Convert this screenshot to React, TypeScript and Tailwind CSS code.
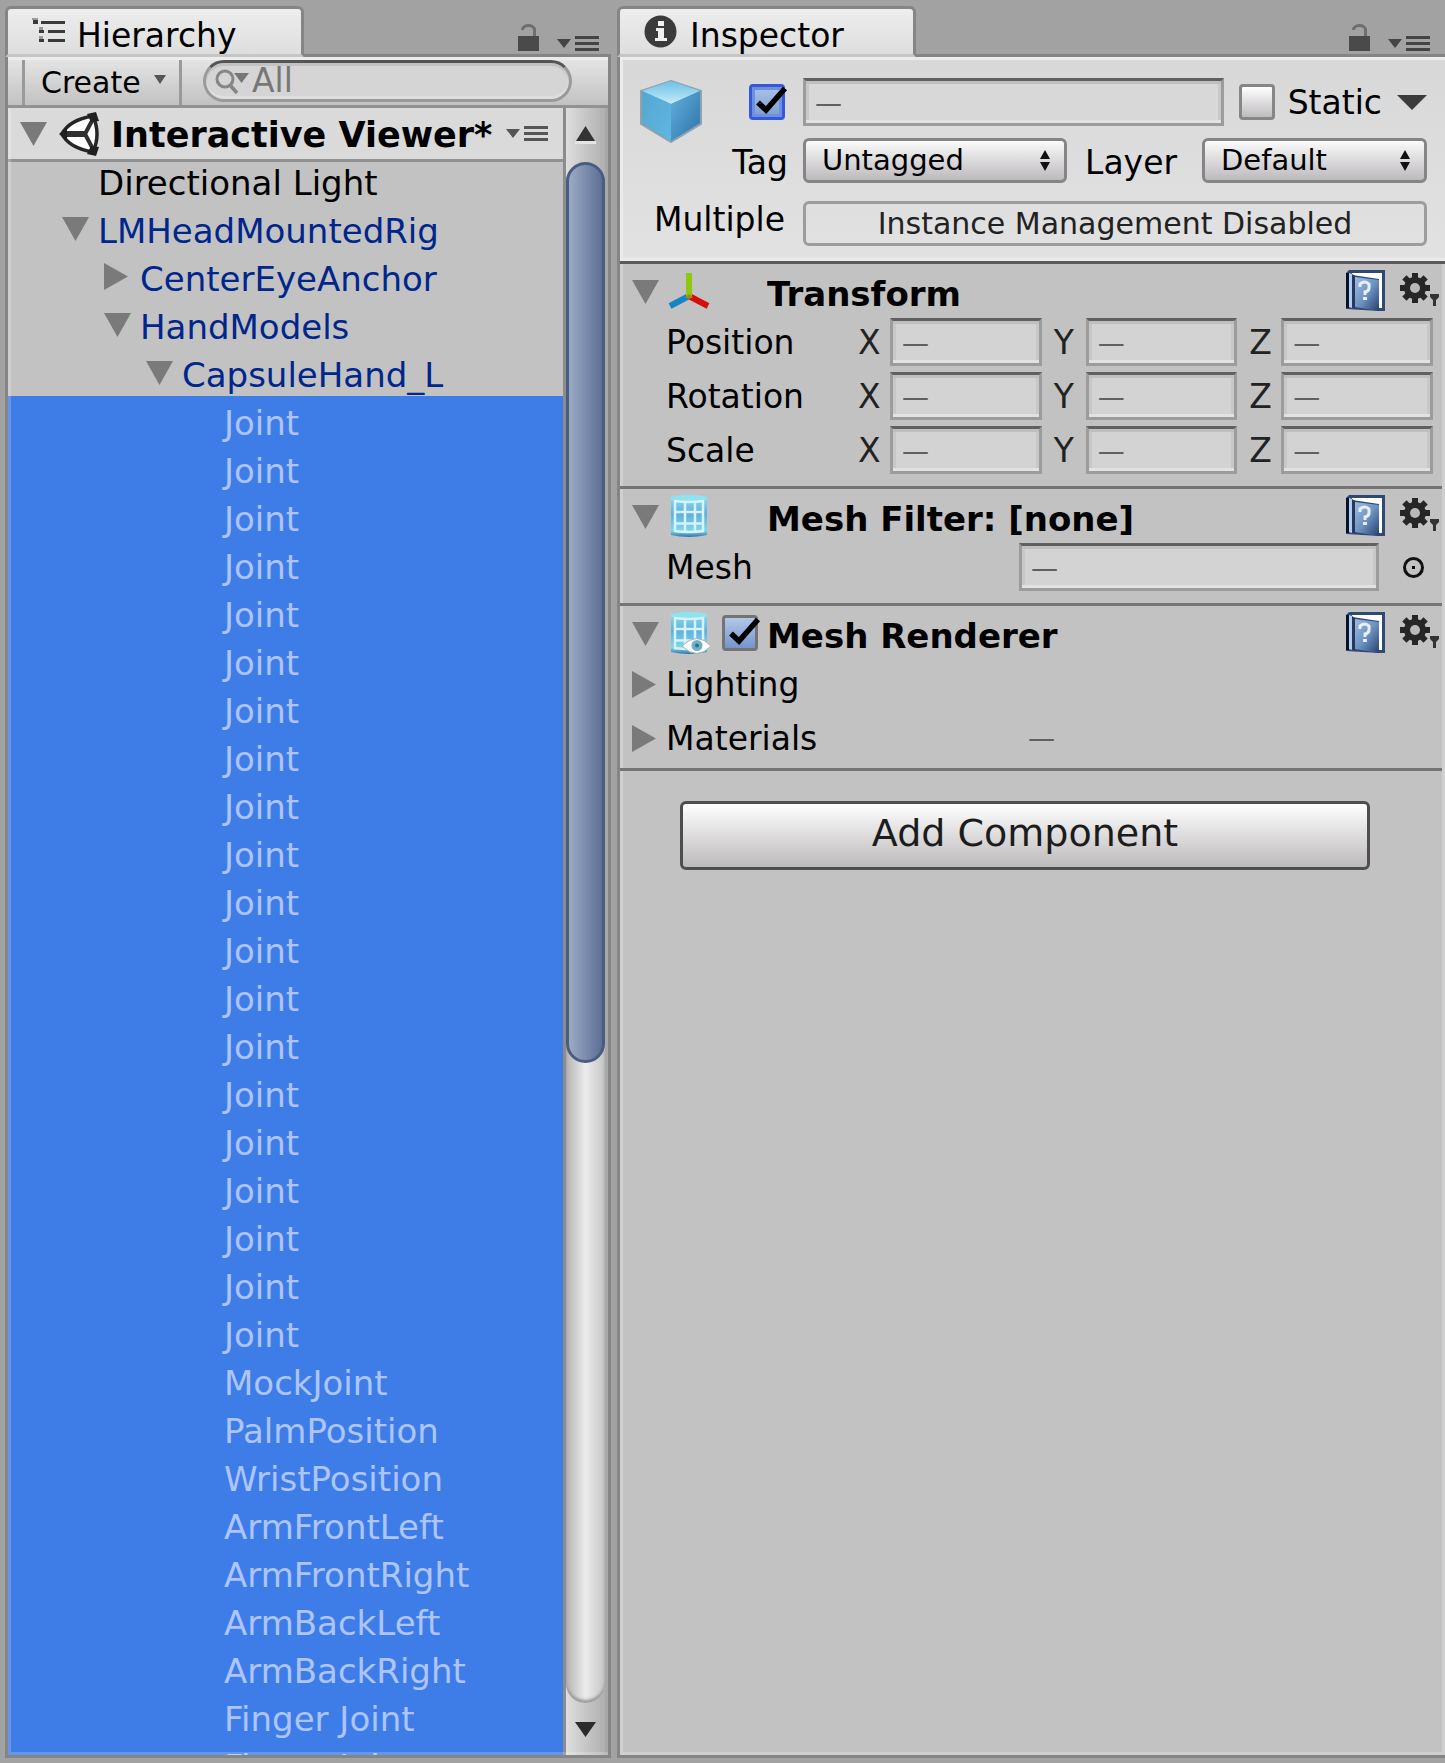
import React, { useState } from "react";

type RowData = { name: string; depth: 0 | 1 | 2 | 3; fold?: "open" | "closed"; kind: "plain" | "prefab" | "selected" };

const joints: RowData[] = Array.from({ length: 20 }, () => ({ name: "Joint", depth: 3, kind: "selected" }));
const others: RowData[] = [
  "MockJoint",
  "PalmPosition",
  "WristPosition",
  "ArmFrontLeft",
  "ArmFrontRight",
  "ArmBackLeft",
  "ArmBackRight",
  "Finger Joint",
  "Finger Joint",
].map((name) => ({ name, depth: 3, kind: "selected" }));

const rows: RowData[] = [
  { name: "Directional Light", depth: 0, kind: "plain" },
  { name: "LMHeadMountedRig", depth: 0, fold: "open", kind: "prefab" },
  { name: "CenterEyeAnchor", depth: 1, fold: "closed", kind: "prefab" },
  { name: "HandModels", depth: 1, fold: "open", kind: "prefab" },
  { name: "CapsuleHand_L", depth: 2, fold: "open", kind: "prefab" },
  ...joints,
  ...others,
];

const indent = ["pl-[54px]", "pl-[96px]", "pl-[138px]", "pl-[180px]"];
const rowColour = {
  plain: "text-black",
  prefab: "text-[#00268c]",
  selected: "bg-[#3e7de7] text-[#adc5fc]",
};

function Fold({ open }: { open: boolean }) {
  return (
    <svg viewBox="0 0 27 27" className="h-[27px] w-[27px] shrink-0" fill="#7a7a7a" aria-hidden="true">
      {open ? <path d="M0 2h27L13.500 26z" /> : <path d="M0 0v27l24-13.500z" />}
    </svg>
  );
}

function LockIcon() {
  return (
    <svg viewBox="0 0 21 27" className="h-[27px] w-[21px]" aria-hidden="true">
      <path d="M0 12h21v15H0z" fill="#4a4a4a" />
      <path d="M4.500 6c0-6 12-6 12 0v6" fill="none" stroke="#6e6e6e" strokeWidth="3" />
    </svg>
  );
}

function MenuIcon({ colour }: { colour: string }) {
  return (
    <svg viewBox="0 0 42 15" className="h-[15px] w-[42px]" fill={colour} aria-hidden="true">
      <path d="M0 3h14L7 12zM18 0h24v3H18zM18 6h24v3H18zM18 12h24v3H18z" />
    </svg>
  );
}

function HierarchyIcon() {
  return (
    <svg viewBox="0 0 33 24" className="mb-[3px] h-6 w-[33px]" fill="#3a3a3a" aria-hidden="true">
      <path d="M9 3h24v3H9zM16 12h17v3H16zM16 21h17v3H16z" />
      <path d="M1 2h5v4H1zM7 12h5v3H7zM7 21h5v3H7z" />
      <path d="M0 0h6v2H0zM7 9h4v3H7zM7 18h4v3H7z" fill="#9a9a9a" />
    </svg>
  );
}

function InfoIcon() {
  return (
    <svg viewBox="0 0 33 33" className="h-[33px] w-[33px]" aria-hidden="true">
      <circle cx="16.500" cy="16.500" r="16" fill="#3b3b3b" />
      <path d="M14 6h6v5h-6zM12 13h8v10h3v3H11v-3h3v-7h-2z" fill="#f0f0f0" />
    </svg>
  );
}

function UnityIcon() {
  return (
    <svg viewBox="0 0 42 44" className="h-11 w-[42px] shrink-0" aria-hidden="true">
      <path d="M3 22Q10 8 34 3q4 9 4 19t-4 19Q10 36 3 22z" fill="#fff" />
      <path
        d="M3 22Q10 8 34 4q4 9 4 18t-4 18Q10 36 3 22z"
        fill="none"
        stroke="#262626"
        strokeWidth="3.500"
        strokeLinejoin="round"
      />
      <path d="M26 22 35 5M26 22l9 17" stroke="#303030" strokeWidth="4" />
      <path d="M3 22h23" stroke="#303030" strokeWidth="6" />
      <path d="M0 22l8-7v14zM28 2l9-2 3 9-8 1zM28 42l9 2 3-9-8-1z" fill="#202020" />
    </svg>
  );
}

function CubeIcon() {
  return (
    <svg viewBox="0 0 66 63" className="h-[63px] w-[66px]" aria-hidden="true">
      <defs>
        <linearGradient id="cubeTop" x1="0" y1="0" x2="0" y2="1">
          <stop offset="0" stopColor="#6ec0e6" />
          <stop offset="1" stopColor="#c3ecf9" />
        </linearGradient>
        <linearGradient id="cubeLeft" x1="0" y1="0" x2="1" y2="1">
          <stop offset="0" stopColor="#55a5cf" />
          <stop offset="1" stopColor="#5fb8e2" />
        </linearGradient>
        <linearGradient id="cubeRight" x1="0" y1="0" x2="1" y2="1">
          <stop offset="0" stopColor="#62b0dc" />
          <stop offset="1" stopColor="#2c72ab" />
        </linearGradient>
      </defs>
      <path d="M33 1 63 11v33L33 62 3 44V11z" fill="#8199a5" stroke="#8fa3ad" strokeWidth="2" />
      <path d="M33 1 62 11 33 24 4 11z" fill="url(#cubeTop)" />
      <path d="M4 11 33 24v37L4 43z" fill="url(#cubeLeft)" />
      <path d="M62 11 33 24v37l29-18z" fill="url(#cubeRight)" />
    </svg>
  );
}

function AxesIcon() {
  return (
    <svg viewBox="0 0 42 39" className="h-[39px] w-[42px]" fill="none" strokeWidth="6" aria-hidden="true">
      <path d="M21 24 2 34" stroke="#1583c6" />
      <path d="M21 24 40 34" stroke="#d50d0d" />
      <path d="M21 26V1" stroke="#8cc80c" />
      <path d="M17 25l4-3 4 3-4 2z" fill="#a8842c" />
    </svg>
  );
}

function MeshIcon({ eye }: { eye?: boolean }) {
  return (
    <svg viewBox="0 0 42 45" className="h-[45px] w-[42px]" aria-hidden="true">
      <defs>
        <linearGradient id="meshFill" x1="0" y1="0" x2="0" y2="1">
          <stop offset="0" stopColor="#8fe0f0" />
          <stop offset="0.450" stopColor="#5fb0de" />
          <stop offset="0.850" stopColor="#7fd8e8" />
          <stop offset="1" stopColor="#2f74b0" />
        </linearGradient>
      </defs>
      <path d="M3 3Q21-1 39 3v38q-18 4-36 0z" fill="url(#meshFill)" />
      <path d="M3 3Q21-1 39 3v3q-18 3-36 0z" fill="#8fe3f0" />
      <path
        d="M6 7q15 2 30 0M6 18h30M6 29.500h30M6 37q15 2 30 0M7 6v32M17 7v31M27 7v31M35 6v32"
        fill="none"
        stroke="#d6f2fa"
        strokeWidth="2.500"
      />
      {eye && (
        <g>
          <path d="M14 35q15-15 29 0-14 15-29 0z" fill="#fff" stroke="#9fb0b8" strokeWidth="1" />
          <circle cx="29" cy="34.500" r="5.500" fill="#6fb0c6" />
          <circle cx="29" cy="34.500" r="2" fill="#2e6f8c" />
        </g>
      )}
    </svg>
  );
}

function BookIcon() {
  return (
    <svg viewBox="0 0 39 42" className="h-[42px] w-[39px]" aria-hidden="true">
      <defs>
        <linearGradient id="bookCover" x1="0" y1="0" x2="1" y2="1">
          <stop offset="0" stopColor="#9dbce0" />
          <stop offset="0.500" stopColor="#6d93c2" />
          <stop offset="1" stopColor="#27406f" />
        </linearGradient>
      </defs>
      <path d="M3 0h36v41h-6L0 39V3z" fill="#2f4a72" />
      <path d="M6 3h30v35h-3V9L6 5z" fill="#fff" />
      <path d="M0 3h3v35H0z" fill="#06122b" />
      <path d="M3 3l3 1v34l-3-1z" fill="#b4cdec" />
      <path d="M9 7l24 3v31L9 37z" fill="url(#bookCover)" />
      <path d="M6 4l3 2v32l-3-1z" fill="#24395e" />
      <path d="M14 17v-3q5-4 9 0v4q0 3-4 4v3" fill="none" stroke="#e8eff8" strokeWidth="3" />
      <path d="M17 27h4v3h-4z" fill="#e8eff8" />
    </svg>
  );
}

function GearIcon() {
  return (
    <svg viewBox="0 0 39 33" className="h-[33px] w-[39px]" aria-hidden="true">
      <g fill="#262626">
        {[0, 45, 90, 135].map((a) => (
          <path key={a} d="M12 0h6v30h-6z" transform={`rotate(${a} 15 15)`} />
        ))}
      </g>
      <circle cx="15" cy="15" r="11" fill="#262626" />
      <circle cx="15" cy="15" r="5" fill="#b9b9b9" />
      <path d="M30 21h9v3l-3 3v6h-3v-6l-3-3z" fill="#333" />
    </svg>
  );
}

function DashField({ label, className }: { label: string; className: string }) {
  return (
    <input
      type="text"
      aria-label={label}
      defaultValue="—"
      className={`h-12 min-w-0 border-[3px] border-[#9c9c9c] border-t-[#606060] pl-[9px] text-[27px] text-[#606060] outline-none shadow-[inset_0_3px_0_#bfbfbf,inset_0_-3px_0_#e2e2e2,inset_3px_0_0_#c8c8c8,inset_-3px_0_0_#c8c8c8] ${className}`}
    />
  );
}

function Check({ id, label, checked, tone }: { id: string; label?: string; checked: boolean; tone: "focus" | "blue" | "empty" }) {
  const [on, setOn] = useState(checked);
  const look = {
    focus: "border-[#3657d8] bg-linear-to-b from-[#a9c2e6] to-[#7b9fd0] shadow-[inset_0_0_0_3px_#6f8fe0]",
    blue: "border-[#747474] bg-linear-to-b from-[#b2c7e8] to-[#7595cc]",
    empty: "border-[#868686] bg-linear-to-b from-white to-[#bfbcbf]",
  }[tone];
  return (
    <span className="relative block h-9 w-9 shrink-0">
      <input
        id={id}
        type="checkbox"
        aria-label={label}
        checked={on}
        onChange={() => setOn(!on)}
        className={`block h-9 w-9 appearance-none rounded-[4px] border-[3px] ${look}`}
      />
      {on && (
        <svg viewBox="0 0 39 36" className="pointer-events-none absolute top-0 left-0 h-9 w-[39px]" aria-hidden="true">
          <path d="M9 18.500 17 26 36 4.500" fill="none" stroke="#000" strokeWidth="5.500" />
        </svg>
      )}
    </span>
  );
}

function Popup({ id, value, className }: { id: string; value: string; className: string }) {
  return (
    <div className={`relative ${className}`}>
      <select
        id={id}
        className="block h-[45px] w-full appearance-none rounded-[6px] border-[3px] border-[#858585] bg-linear-to-b from-[#fbfbfb] to-[#bdbabd] pl-4 text-[29px] leading-[39px] text-black outline-none"
      >
        <option>{value}</option>
      </select>
      <svg viewBox="0 0 12 21" className="pointer-events-none absolute top-3 right-4 h-[21px] w-3" fill="#111" aria-hidden="true">
        <path d="M6 0l5 9H1zM6 21l5-9H1z" />
      </svg>
    </div>
  );
}

function Tab({ icon, title, className }: { icon: React.ReactNode; title: string; className: string }) {
  return (
    <button
      type="button"
      className={`relative -mb-[3px] flex h-[51px] items-center rounded-t-[6px] border-[3px] border-[#858585] border-b-[#c6c6c6] bg-linear-to-b from-[#ededed] to-[#dedede] text-[33px] leading-[36px] text-black ${className}`}
    >
      {icon}
      <span className="pt-[9px]">{title}</span>
    </button>
  );
}

function PanelTools({ name }: { name: string }) {
  return (
    <div className="ml-auto flex items-end gap-[18px] pb-[3px]">
      <button type="button" aria-label={`Lock ${name}`}>
        <LockIcon />
      </button>
      <button type="button" aria-label={`${name} menu`}>
        <MenuIcon colour="#444" />
      </button>
    </div>
  );
}

function Hierarchy() {
  return (
    <section className="flex min-h-0 min-w-0 flex-col">
      <div className="flex h-[54px] shrink-0 pt-1.5 pr-3">
        <Tab title="Hierarchy" className="w-[299px] gap-3 pl-6" icon={<HierarchyIcon />} />
        <PanelTools name="Hierarchy" />
      </div>
      <div className="flex min-h-0 flex-1 flex-col border-[3px] border-[#858585] bg-[#c2c2c2]">
        <div className="flex h-[51px] shrink-0 border-t-[3px] border-b-[3px] border-t-[#ececec] border-b-[#929292] bg-linear-to-b from-[#e4e4e4] to-[#c2c2c2]">
          <button
            type="button"
            className="ml-3.5 flex w-[160px] shrink-0 items-center gap-[13px] border-x-[3px] border-[#9a9a9a] pl-4 text-[30px] leading-[42px] text-black"
          >
            Create
            <svg viewBox="0 0 12 9" className="mb-1.5 h-[9px] w-3" fill="#555" aria-hidden="true">
              <path d="M0 0h12L6 9z" />
            </svg>
          </button>
          <div className="mr-9 ml-[21px] flex h-[42px] min-w-0 flex-1 items-center rounded-full border-[3px] border-[#9a9a9a] border-t-[#555] bg-[#d5d5d5] pl-2 shadow-[inset_0_3px_0_#c2c2c2,inset_0_-3px_0_#dedede]">
            <svg viewBox="0 0 36 27" className="h-[27px] w-9 shrink-0" aria-hidden="true">
              <circle cx="11" cy="11" r="8" fill="none" stroke="#868686" strokeWidth="3" />
              <path d="M16 17l7 8" stroke="#868686" strokeWidth="3.500" />
              <path d="M20 5h15l-7.500 10z" fill="#777" />
            </svg>
            <input
              type="text"
              aria-label="Search"
              placeholder="All"
              className="h-9 min-w-0 flex-1 bg-transparent pl-0.5 text-[33px] leading-[36px] text-[#777] outline-none placeholder:text-[#777]"
            />
          </div>
        </div>
        <div className="relative flex min-h-0 flex-1">
          <div className="min-w-0 flex-1 overflow-hidden">
            <div className="-mb-1.5 flex h-[54px] items-center border-b-[3px] border-[#929292] bg-[#dadada] pr-[15px] pl-3 text-black">
              <Fold open />
              <span className="ml-3">
                <UnityIcon />
              </span>
              <span className="ml-2.5 truncate pt-1 text-[35px] leading-[45px] font-bold">Interactive Viewer*</span>
              <button type="button" aria-label="Scene menu" className="ml-auto shrink-0">
                <MenuIcon colour="#555" />
              </button>
            </div>
            <ul>
              {rows.map((r, i) => (
                <li key={i} className={`flex h-12 items-center gap-[9px] ${indent[r.depth]} ${rowColour[r.kind]}`}>
                  {r.fold ? <Fold open={r.fold === "open"} /> : <span className="w-[27px] shrink-0" />}
                  <span className="pt-[7px] text-[34px] leading-[41px] whitespace-nowrap">{r.name}</span>
                </li>
              ))}
            </ul>
          </div>
          <div className="flex w-[45px] shrink-0 flex-col border-x-[3px] border-[#8c8c8c] border-r-[#a8a8a8] bg-linear-to-r from-[#dedede] to-[#b0b0b0]">
            <button type="button" aria-label="Scroll up" className="flex h-[54px] shrink-0 items-center justify-center">
              <svg viewBox="0 0 21 18" className="h-[18px] w-[21px]" aria-hidden="true">
                <path d="M10.500 0 20 15H1z" fill="#333" />
                <path d="M0 15h21v3H0z" fill="#e4e4e4" />
              </svg>
            </button>
            <div className="min-h-0 flex-1 rounded-full bg-linear-to-r from-[#b4b4b4] via-[#ececec] to-[#c4c4c4] shadow-[inset_0_-3px_3px_#999]">
              <div className="h-[58.500%] rounded-full border-[3px] border-[#4a5c80] bg-linear-to-r from-[#9babc5] to-[#5d7095]" />
            </div>
            <button type="button" aria-label="Scroll down" className="flex h-[52px] shrink-0 items-center justify-center">
              <svg viewBox="0 0 21 15" className="h-[15px] w-[21px]" aria-hidden="true">
                <path d="M0 0h21L10.500 15z" fill="#2b2b2b" />
              </svg>
            </button>
          </div>
          <div className="pointer-events-none absolute inset-0 shadow-[inset_3px_-3px_0_rgba(255,255,255,0.2)]" />
        </div>
      </div>
    </section>
  );
}

function Component({
  title,
  icon,
  toggle,
  children,
  className,
}: {
  title: string;
  icon: React.ReactNode;
  toggle?: React.ReactNode;
  children: React.ReactNode;
  className: string;
}) {
  return (
    <section className={`border-b-[3px] border-[#757575] ${className}`}>
      <div className="flex h-[54px] items-center pr-[3px] pl-3">
        <Fold open />
        <span className="ml-[9px] flex w-[42px] shrink-0">{icon}</span>
        <span className="ml-3 flex w-[42px] shrink-0">{toggle}</span>
        <h2 className="ml-[3px] truncate pt-1.5 text-[34px] leading-[45px] font-bold">{title}</h2>
        <button type="button" aria-label={`${title} help`} className="ml-auto shrink-0">
          <BookIcon />
        </button>
        <button type="button" aria-label={`${title} settings`} className="mb-1 ml-[15px] shrink-0">
          <GearIcon />
        </button>
      </div>
      <div className="flex flex-col gap-1.5">{children}</div>
    </section>
  );
}

function VectorRow({ label }: { label: string }) {
  return (
    <div className="flex h-12 items-center pr-[9px] pl-[46px]">
      <span className="w-48 shrink-0 pt-0.5">{label}</span>
      <div className="grid min-w-0 flex-1 grid-cols-3 gap-x-3">
        {["X", "Y", "Z"].map((axis) => (
          <div key={axis} className="flex min-w-0 items-center">
            <span className="w-8 shrink-0 pt-0.5 text-[#222]">{axis}</span>
            <DashField label={`${label} ${axis}`} className="flex-1 bg-[#d3d3d3]" />
          </div>
        ))}
      </div>
    </div>
  );
}

function Inspector() {
  return (
    <section className="flex min-h-0 min-w-0 flex-col">
      <div className="flex h-[54px] shrink-0 pt-1.5 pr-[15px]">
        <Tab title="Inspector" className="w-[299px] gap-[13px] pl-6" icon={<InfoIcon />} />
        <PanelTools name="Inspector" />
      </div>
      <div className="min-h-0 flex-1 border-y-[3px] border-l-[3px] border-[#858585] bg-[#c2c2c2]">
        <div className="h-full overflow-hidden pr-[3px] text-[33px] leading-[42px] text-black shadow-[inset_3px_-3px_0_#d0d0d0,inset_-3px_0_0_#d0d0d0]">
          <div className="-mr-[3px] flex border-t-[3px] border-b-[3px] border-t-[#ececec] border-b-[#5a5a5a] bg-linear-to-b from-[#d8d8d8] to-[#e2e2e2] pr-[18px] pb-[15px] shadow-[inset_3px_-3px_0_#ebebeb]">
            <div className="w-[109px] shrink-0 pt-5 pl-[18px]">
              <CubeIcon />
            </div>
            <div className="flex min-w-0 flex-1 flex-col pt-[18px]">
              <div className="flex h-12 items-center">
                <div className="flex w-[74px] shrink-0 pl-5">
                  <Check id="active" label="Active" checked tone="focus" />
                </div>
                <DashField label="Name" className="flex-1 bg-[#d8d8d8]" />
                <span className="ml-[15px] flex shrink-0 items-center">
                  <Check id="static" checked={false} tone="empty" />
                  <label htmlFor="static" className="ml-[13px] pt-0.5">
                    Static
                  </label>
                  <svg viewBox="0 0 30 15" className="ml-[15px] h-[15px] w-[30px]" fill="#3c3c3c" aria-hidden="true">
                    <path d="M0 0h30L15 15z" />
                  </svg>
                </span>
              </div>
              <div className="mt-3 flex h-[45px] items-center">
                <label htmlFor="tag" className="w-[74px] shrink-0 pt-1 pr-[15px] text-right">
                  Tag
                </label>
                <Popup id="tag" value="Untagged" className="min-w-0 flex-[264]" />
                <label htmlFor="layer" className="w-[135px] shrink-0 pt-1 pl-[18px]">
                  Layer
                </label>
                <Popup id="layer" value="Default" className="min-w-0 flex-[225]" />
              </div>
              <div className="mt-[18px] -ml-20 flex h-[45px] items-center">
                <span className="w-[154px] shrink-0 pr-[18px] pb-2 text-right">Multiple</span>
                <button
                  type="button"
                  className="h-[45px] min-w-0 flex-1 rounded-[6px] border-[3px] border-[#9c9c9c] text-[30px] leading-[39px] text-[#222]"
                >
                  Instance Management Disabled
                </button>
              </div>
            </div>
          </div>

          <Component title="Transform" icon={<AxesIcon />} className="pb-3">
            <VectorRow label="Position" />
            <VectorRow label="Rotation" />
            <VectorRow label="Scale" />
          </Component>

          <Component title="Mesh Filter: [none]" icon={<MeshIcon />} className="pb-3">
            <div className="flex h-12 items-center pr-[18px] pl-[46px]">
              <div className="grid min-w-0 flex-1 grid-cols-[353fr_360fr] items-center">
                <span className="pt-0.5">Mesh</span>
                <DashField label="Mesh" className="w-full bg-[#d3d3d3]" />
              </div>
              <button type="button" aria-label="Pick mesh" className="ml-6 shrink-0">
                <svg viewBox="0 0 21 21" className="h-[21px] w-[21px]" aria-hidden="true">
                  <circle cx="10.500" cy="10.500" r="9" fill="none" stroke="#111" strokeWidth="3" />
                  <path d="M9 9h3v3H9z" />
                </svg>
              </button>
            </div>
          </Component>

          <Component
            title="Mesh Renderer"
            icon={<MeshIcon eye />}
            toggle={<Check id="renderer" label="Mesh Renderer enabled" checked tone="blue" />}
            className="pb-1.5"
          >
            <div className="flex h-12 items-center pl-3">
              <Fold open={false} />
              <span className="ml-[7px] pt-0.5">Lighting</span>
            </div>
            <div className="flex h-12 items-center pr-3 pl-3">
              <Fold open={false} />
              <span className="ml-[7px] flex-[362] pt-0.5">Materials</span>
              <span className="flex-[402] text-[27px] text-[#606060]">—</span>
            </div>
          </Component>

          <div className="mt-[30px] mr-[72px] ml-[60px]">
            <button
              type="button"
              className="h-[69px] w-full rounded-[6px] border-[3px] border-[#4e4e4e] bg-linear-to-b from-white to-[#bdbabb] pb-1 text-[38px] leading-[57px] text-[#1c1c1c]"
            >
              Add Component
            </button>
          </div>
        </div>
      </div>
    </section>
  );
}

export default function App() {
  return (
    <main className="grid h-screen grid-cols-[606fr_828fr] grid-rows-[minmax(0,1fr)] gap-x-1.5 overflow-hidden bg-[#a2a2a2] pb-[5px] pl-[5px] font-['DejaVu_Sans',Verdana,sans-serif]">
      <Hierarchy />
      <Inspector />
    </main>
  );
}
